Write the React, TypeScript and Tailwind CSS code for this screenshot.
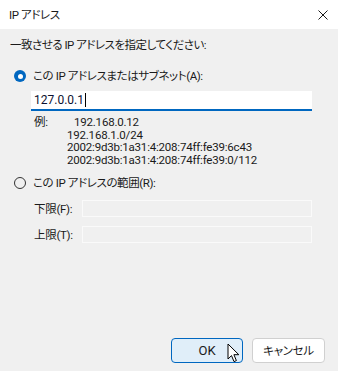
import React from 'react';

const font = { fontFamily: 'Roboto, "Noto Sans CJK JP", sans-serif' };

const Cursor = () => (
  <svg width="14" height="21" viewBox="0 0 14 21" className="absolute left-[227px] top-[343px]">
    <path
      d="M1 1 L1 16 L4.5 12.6 L7 18.6 L9.4 17.6 L6.9 11.7 L11.8 11.7 Z"
      fill="#fff"
      stroke="#000"
      strokeWidth="1"
      strokeLinejoin="round"
    />
  </svg>
);

export default function App() {
  return (
    <div
      style={font}
      className="relative w-[338px] h-[371px] bg-[#f0f0f0] flex flex-col text-[12px] text-[#1a1a1a] overflow-hidden [font-feature-settings:'palt']"
    >
      <div className="h-[29px] bg-white flex items-center justify-between pl-[9px] pr-[10px]">
        <span className="leading-[14px] text-[11.5px] tracking-[-0.4px]">IP アドレス</span>
        <svg width="10" height="10" viewBox="0 0 10 10">
          <path d="M0.5 0.5 L9.5 9.5 M9.5 0.5 L0.5 9.5" stroke="#1a1a1a" strokeWidth="1" />
        </svg>
      </div>

      <div className="flex-1 flex flex-col">
        <p className="mt-[8px] ml-[10px] h-[16px] leading-[16px] text-[11.5px] tracking-[-0.5px]">
          一致させる IP アドレスを指定してください:
        </p>

        <div className="mt-[15px] ml-[14px] h-[16px] flex items-center gap-[7px]">
          <span className="w-[12px] h-[12px] rounded-full bg-[#0067c0] flex items-center justify-center">
            <span className="w-[5px] h-[5px] rounded-full bg-white" />
          </span>
          <span className="leading-[16px] text-[11.5px] tracking-[-0.4px]">この IP アドレスまたはサブネット(A):</span>
        </div>

        <div className="mt-[7px] ml-[31px] w-[281px] h-[20px] bg-white border-b-2 border-[#0067c0] flex items-center pl-[3px]">
          <span className="leading-[16px] text-[#0b1030]">127.0.0.1</span>
          <span className="w-px h-[14px] bg-black ml-px" />
        </div>

        <div className="mt-[5px] ml-[34px] flex text-[11.5px] leading-[12.5px] tracking-[-0.2px]">
          <span className="w-[33px]">例:</span>
          <div className="flex flex-col">
            <span className="ml-[7px]">192.168.0.12</span>
            <span>192.168.1.0/24</span>
            <span>2002:9d3b:1a31:4:208:74ff:fe39:6c43</span>
            <span>2002:9d3b:1a31:4:208:74ff:fe39:0/112</span>
          </div>
        </div>

        <div className="mt-[9px] ml-[14px] h-[16px] flex items-center gap-[7px]">
          <span className="w-[12px] h-[12px] rounded-full border border-[#333]" />
          <span className="leading-[16px] text-[11.5px] tracking-[-0.4px]">この IP アドレスの範囲(R):</span>
        </div>

        <div className="mt-[9px] ml-[34px] flex items-center h-[17px]">
          <span className="w-[48px] leading-[16px] text-[11.5px] tracking-[-0.3px]">下限(F):</span>
          <div className="w-[230px] h-[17px] border border-[#fafafa] bg-[#f0f0f0]" />
        </div>

        <div className="mt-[9px] ml-[34px] flex items-center h-[17px]">
          <span className="w-[48px] leading-[16px] text-[11.5px] tracking-[-0.3px]">上限(T):</span>
          <div className="w-[230px] h-[17px] border border-[#fafafa] bg-[#f0f0f0]" />
        </div>

        <div className="mt-auto mb-[8px] mr-[13px] flex justify-end gap-[9px]">
          <button className="w-[72px] h-[25px] rounded-[4px] border border-[#0067c0] bg-[#e0eef9] text-[13px] leading-[16px]">
            OK
          </button>
          <button className="w-[73px] h-[25px] rounded-[4px] border border-[#d0d0d0] bg-white leading-[16px] text-[11.5px] tracking-[-0.3px]">
            キャンセル
          </button>
        </div>
      </div>

      <Cursor />
    </div>
  );
}
